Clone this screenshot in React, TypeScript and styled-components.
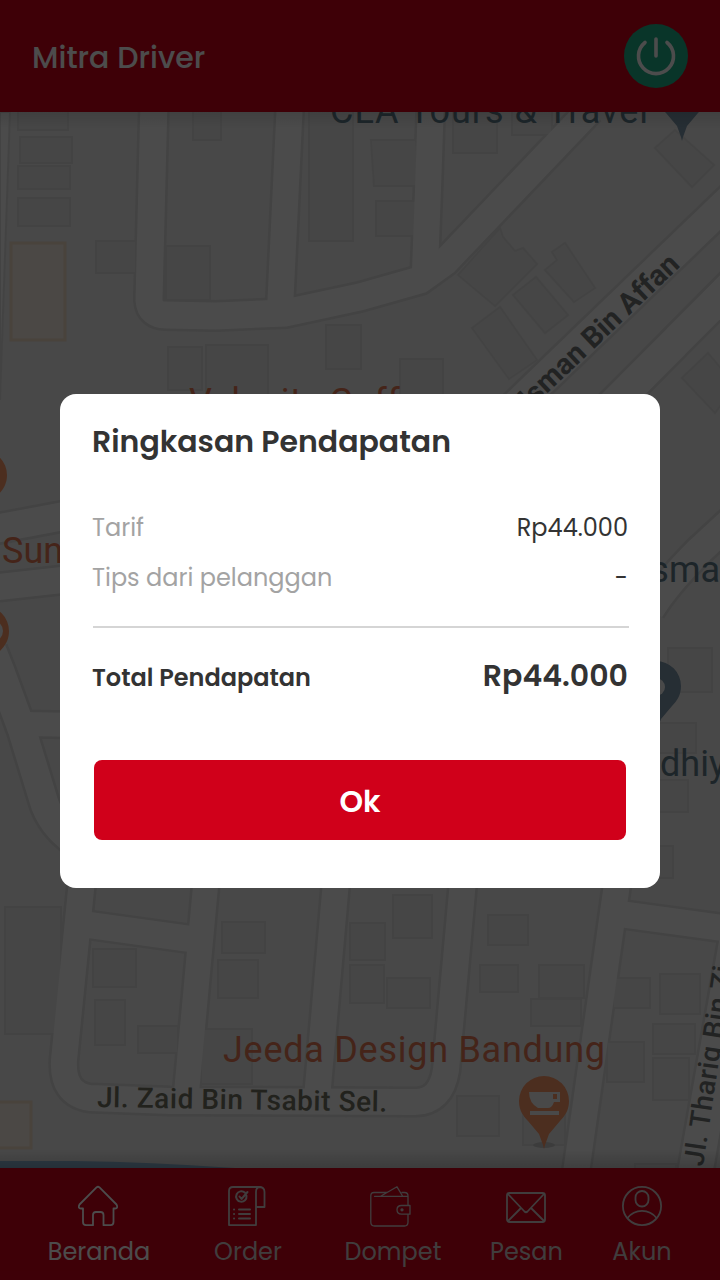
import React from 'react';
import styled, { createGlobalStyle } from 'styled-components';

const Global = createGlobalStyle`
  * { box-sizing: border-box; }
  body { margin: 0; background: #484848; }
`;

const Screen = styled.div`
  position: relative;
  width: 720px;
  height: 1280px;
  display: flex;
  flex-direction: column;
  overflow: hidden;
  font-family: Poppins, Inter, sans-serif;
`;

const Header = styled.header`
  height: 112px;
  flex: none;
  display: flex;
  align-items: center;
  justify-content: space-between;
  padding: 0 32px;
  background: #d0001a;
`;

const AppTitle = styled.h1`
  margin: 0;
  padding-top: 3px;
  color: #fff;
  font-size: 30px;
  font-weight: 500;
  line-height: 40px;
`;

const PowerButton = styled.button`
  width: 64px;
  height: 64px;
  padding: 0;
  border: 0;
  border-radius: 50%;
  background: #21b189;
  display: grid;
  place-items: center;
`;

const MapArea = styled.main`
  flex: 1;
  height: 1056px;
  background: #f0f0f0;
  svg { display: block; }
`;

const Nav = styled.nav`
  height: 112px;
  flex: none;
  display: grid;
  grid-template-columns: 150px 148px 142px 125px 106px;
  padding: 18px 0 0 24px;
  background: #d0001a;
`;

const NavItem = styled.a<{ $active?: boolean }>`
  display: flex;
  flex-direction: column;
  align-items: center;
  color: ${p => (p.$active ? '#fff' : '#d6cccd')};
  svg { display: block; overflow: visible; }
`;

const NavLabel = styled.span`
  margin-top: 10px;
  font-size: 24px;
  line-height: 32px;
`;

const Overlay = styled.div`
  position: absolute;
  inset: 0;
  padding: 394px 60px 0;
  background: rgba(0, 0, 0, 0.7);
`;

const Dialog = styled.section`
  height: 494px;
  padding: 24px 32px 48px;
  border-radius: 16px;
  background: #fff;
  color: #333;
  display: flex;
  flex-direction: column;
`;

const DialogTitle = styled.h2`
  flex: none;
  margin: 0 0 37px;
  font-size: 30px;
  font-weight: 600;
  line-height: 48px;
`;

const Row = styled.div`
  flex: none;
  height: 50px;
  display: flex;
  justify-content: space-between;
  align-items: baseline;
  line-height: 50px;
  font-size: 24px;
`;

const Label = styled.span`
  color: #a3a3a3;
`;

const Divider = styled.hr`
  flex: none;
  width: 536px;
  height: 2px;
  margin: 23px 0 23px 1px;
  border: 0;
  background: #d5d5d5;
`;

const TotalLabel = styled.span`
  font-size: 24px;
  font-weight: 600;
`;

const TotalValue = styled.span`
  font-size: 30px;
  font-weight: 600;
`;

const OkButton = styled.button`
  flex: none;
  height: 80px;
  margin: 59px 2px 0;
  border: 0;
  border-radius: 8px;
  background: #d0001a;
  color: #fff;
  font: 600 30px/80px Poppins, Inter, sans-serif;
  padding: 2px 0 0;
`;

const ROADS: [string, number][] = [
  ['M154 100L149 300Q150 315 166 315L216 316L285 313L360 297L420 280L445 262L590 110', 27],
  ['M290 100L280 310', 26],
  ['M431 100L428 190L425 270', 26],
  ['M740 190L500 421', 30],
  ['M740 277L590 428', 31],
  ['M740 513L700 550Q665 585 650 610', 28],
  ['M-10 530L80 513', 28],
  ['M-10 588L80 578', 26],
  ['M-8 650L0 670L22 730L45 805Q55 830 80 845', 28],
  ['M25 724L80 725', 24],
  ['M83 870L64 1060Q62 1094 90 1098L170 1101L415 1102Q441 1102 446 1070L464 870', 26],
  ['M82 924L205 941', 26],
  ['M207 870L186 1098', 25],
  ['M337 870L317 1098', 26],
  ['M619 870L575 1180', 26],
  ['M620 914L730 929', 26],
  ['M740 920L694 1180', 34],
];

const BUILDINGS: [number, number, number, number][] = [
  [18, 105, 50, 25], [20, 137, 52, 26], [18, 166, 52, 23], [18, 198, 52, 28],
  [96, 241, 40, 32], [166, 246, 44, 54], [193, 105, 28, 35], [309, 105, 44, 136],
  [168, 347, 34, 43], [206, 345, 62, 55], [326, 325, 35, 44], [376, 201, 41, 35],
  [453, 112, 44, 41], [512, 100, 40, 35], [400, 359, 43, 45], [668, 648, 44, 44],
  [655, 723, 41, 30], [655, 780, 33, 32], [650, 846, 23, 32], [5, 907, 56, 127],
  [93, 949, 43, 38], [95, 1000, 30, 45], [138, 1026, 40, 27], [222, 922, 43, 31],
  [218, 960, 40, 38], [201, 1029, 51, 55], [350, 923, 35, 37], [350, 965, 34, 38],
  [393, 895, 39, 43], [387, 978, 43, 30], [488, 915, 40, 30], [480, 965, 38, 27],
  [539, 965, 45, 33], [531, 999, 50, 27], [613, 978, 37, 30], [660, 974, 40, 40],
  [653, 1024, 42, 30], [653, 1058, 36, 42], [607, 1042, 37, 40], [457, 1096, 42, 40],
  [523, 1110, 42, 35], [635, 1164, 41, 20],
];

const BLOCKS = [
  'M371 140h45l3 46h-45z',
  'M655 148L675 130L714 165L692 187z',
  'M458 275L500 228L503 237L515 251L523 248L537 264L495 306z',
  'M513 295L536 277L568 315L545 333z',
  'M545 270L557 260L552 252L565 243L595 288L574 302z',
  'M472 328L500 307L537 360L509 379z',
  'M682 378L708 353L735 385L715 413z',
];

const Pin = ({ x, y, fill }: { x: number; y: number; fill: string }) => (
  <path
    d={`M${x - 25} ${y}a25 25 0 0 1 50 0c0 9-4 15-9 20l-11 13l-4 11l-1 4l-1-4l-4-11l-11-13c-5-5-9-11-9-20z`}
    fill={fill}
  />
);

const CityMap = () => (
  <svg width="720" height="1056" viewBox="0 112 720 1056" fontFamily="Roboto, sans-serif">
    <defs>
      <linearGradient id="topShade" x1="0" x2="0" y1="0" y2="1">
        <stop offset="0" stopOpacity="0.1" />
        <stop offset="1" stopOpacity="0" />
      </linearGradient>
      <linearGradient id="bottomShade" x1="0" x2="0" y1="0" y2="1">
        <stop offset="0" stopOpacity="0" />
        <stop offset="1" stopOpacity="0.16" />
      </linearGradient>
    </defs>
    <path d="M0 112H10L0 400z" fill="#fbfbfb" stroke="#e2e2e2" strokeWidth="2" />
    <g fill="none" stroke="#dfdfdf">
      {ROADS.map(([d, w]) => <path key={d} d={d} strokeWidth={w + 5} />)}
    </g>
    <g fill="#ebebeb" stroke="#e2e2e2" strokeWidth="2">
      {BUILDINGS.map(([x, y, w, h]) => <rect key={`${x}-${y}`} x={x} y={y} width={w} height={h} />)}
      {BLOCKS.map(d => <path key={d} d={d} />)}
    </g>
    <g fill="none" stroke="#fbfbfb">
      {ROADS.map(([d, w]) => <path key={d} d={d} strokeWidth={w} />)}
    </g>
    <g fill="#fbf1e6" stroke="#f3dfca" strokeWidth="3">
      <rect x="11" y="243" width="54" height="97" />
      <rect x="-4" y="1102" width="35" height="46" />
    </g>
    <path d="M0 1161H75Q150 1162 235 1168H0z" fill="#95c0e0" />

    <Pin x={682} y={93} fill="#7f99ad" />
    <Pin x={656} y={686} fill="#7f99ad" />
    <circle cx="656" cy="687" r="9" fill="#f4f4f4" />
    <Pin x={-18} y={475} fill="#ff9968" />
    <Pin x={-16} y={631} fill="#ff9968" />
    <circle cx="-8" cy="631" r="11" fill="#f4f4f4" />
    <ellipse cx="544" cy="1145" rx="11" ry="3" fill="#c8c8c8" />
    <Pin x={544} y={1101} fill="#ff9968" />
    <path d="M529 1092h31v10h-6q-2 6-6 6h-10q-9-5-9-16zM530 1111h29v4h-29z" fill="#f4f4f4" />
    <path d="M553 1094h4v5h-4z" fill="#ff9968" />

    <g fontSize="36" fill="#617d8b">
      <text x="330" y="123" textLength="318">CLA Tours &amp; Travel</text>
      <text x="627" y="582">Usman</text>
      <text x="660" y="776">dhiyah</text>
    </g>
    <g fontSize="36" fill="#e67855">
      <text x="189" y="414" letterSpacing="0.5">Velocity Coffee</text>
      <text x="2" y="563">Sunda</text>
      <text x="223" y="1062" textLength="382">Jeeda Design Bandung</text>
    </g>
    <g fontSize="28" fontWeight="500" fill="#727676">
      <text fontSize="29" fontWeight="700" textAnchor="end" transform="translate(681 266) rotate(-43.6)">Jl. Usman Bin Affan</text>
      <text textLength="290" fill="#727262" transform="translate(97 1107) rotate(0.9)">Jl. Zaid Bin Tsabit Sel.</text>
      <text letterSpacing="0.4" transform="translate(703 1167) rotate(-81.500)">Jl. Thariq Bin Zi</text>
    </g>
    <rect y="112" width="720" height="16" fill="url(#topShade)" />
    <rect y="1150" width="720" height="18" fill="url(#bottomShade)" />
  </svg>
);

const iconProps = {
  height: 40,
  fill: 'none',
  stroke: 'currentColor',
  strokeWidth: 1.8,
  strokeLinejoin: 'round' as const,
  strokeLinecap: 'round' as const,
};

const PowerIcon = () => (
  <svg width="64" height="64" fill="none" stroke="#fff" strokeWidth="3.6" strokeLinecap="round">
    <path d="M32 15v17M21 18.5a17.5 17.5 0 1 0 22 0" />
  </svg>
);

const HomeIcon = () => (
  <svg width="43" viewBox="0 0 43 40" {...iconProps}>
    <path d="M18.5 1.4Q20 .2 21.5 1.4L38.5 18.5Q40.5 22.4 37 22.5H35.5V36Q35.5 39.2 32.5 39.2H25.5V29Q25.5 26 22.5 26H18Q15 26 15 29V39.2H8Q5 39.2 5 36V22.5H3Q-.5 22.4 1.5 18.5z" />
  </svg>
);

const OrderIcon = () => (
  <svg width="40" viewBox="0 0 40 40" {...iconProps}>
    <path d="M28 21V39.1H1V5Q1 1 5 1H31Q36.5 1 36.5 6V21H28V6Q28 1 32 1" />
    <path d="M16.8 6.6a5.2 5.2 0 1 0 1.7 3.2M11.5 10.5l2 2.5l6-7" strokeWidth="2" />
    <path d="M6 23.5h.1M6 28h.1M6 32.5h.1M11 23.5h11M11 28h11M11 32.5h11" strokeWidth="2" />
  </svg>
);

const WalletIcon = () => (
  <svg width="46" viewBox="0 0 46 40" {...iconProps} strokeWidth="1.3">
    <path d="M38 19V10Q38 6.5 34.5 6.5H32M17 6.5H4Q.8 6.5 .8 10V36Q.8 40 4.5 40H34.5Q38 40 38 36V28.5M4.5 10.3H37M11 10L27 .8L32.5 10M40 19.5H31.5Q27 19.5 27 23.8T31.5 28.2H40z" />
    <circle cx="32" cy="23.8" r="1" fill="currentColor" />
  </svg>
);

const MailIcon = () => (
  <svg width="42" viewBox="0 0 42 40" {...iconProps}>
    <rect x="1" y="7" width="38" height="29" rx="2.5" />
    <path d="M2 8L18.5 25.5Q20 27 21.5 25.5L38 8M2 35L15 22M38 35L25 22" />
  </svg>
);

const AccountIcon = () => (
  <svg width="40" viewBox="0 0 40 40" {...iconProps}>
    <circle cx="20" cy="20" r="19.1" />
    <rect x="13.5" y="5" width="13" height="15.5" rx="6.5" />
    <path d="M5.5 32Q11 24.8 20 24.8T34.5 32" />
  </svg>
);

const NAV = [
  { label: 'Beranda', Icon: HomeIcon, active: true },
  { label: 'Order', Icon: OrderIcon },
  { label: 'Dompet', Icon: WalletIcon },
  { label: 'Pesan', Icon: MailIcon },
  { label: 'Akun', Icon: AccountIcon },
];

export default function App() {
  return (
    <Screen>
      <Global />
      <Header>
        <AppTitle>Mitra Driver</AppTitle>
        <PowerButton aria-label="Power"><PowerIcon /></PowerButton>
      </Header>
      <MapArea><CityMap /></MapArea>
      <Nav>
        {NAV.map(({ label, Icon, active }) => (
          <NavItem key={label} $active={active}>
            <Icon />
            <NavLabel>{label}</NavLabel>
          </NavItem>
        ))}
      </Nav>
      <Overlay>
        <Dialog role="dialog">
          <DialogTitle>Ringkasan Pendapatan</DialogTitle>
          <Row><Label>Tarif</Label><span>Rp44.000</span></Row>
          <Row><Label>Tips dari pelanggan</Label><span>-</span></Row>
          <Divider />
          <Row>
            <TotalLabel>Total Pendapatan</TotalLabel>
            <TotalValue>Rp44.000</TotalValue>
          </Row>
          <OkButton>Ok</OkButton>
        </Dialog>
      </Overlay>
    </Screen>
  );
}
